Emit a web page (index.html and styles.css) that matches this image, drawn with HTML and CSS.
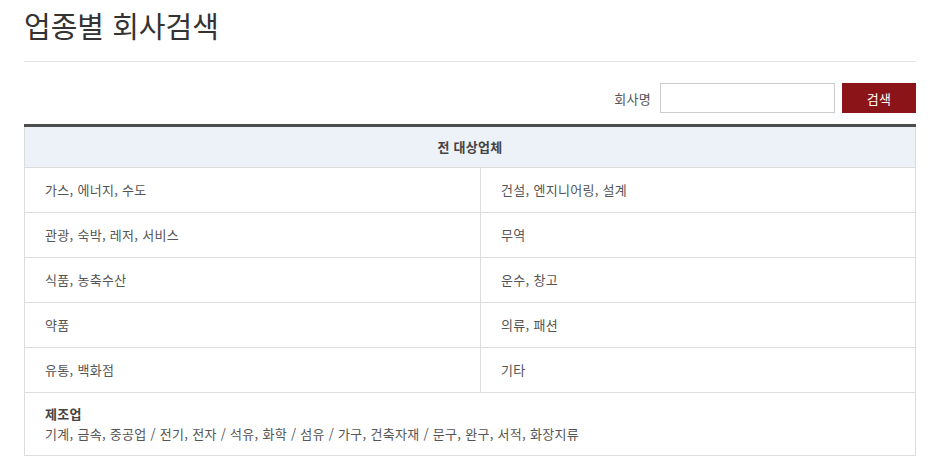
FILE: index.html
```html
<!DOCTYPE html>
<html lang="ko">
<head>
<meta charset="utf-8">
<link rel="stylesheet" href="styles.css">
</head>
<body>
<div class="page">
  <h1 class="title">업종별 회사검색</h1>
  <form class="search">
    <label class="search-label" for="company">회사명</label>
    <input class="search-input" id="company" type="text">
    <button class="search-btn" type="button">검색</button>
  </form>
  <div class="table">
    <div class="head">전 대상업체</div>
    <div class="grid">
      <div class="cell">가스, 에너지, 수도</div>
      <div class="cell">건설, 엔지니어링, 설계</div>
      <div class="cell">관광, 숙박, 레저, 서비스</div>
      <div class="cell">무역</div>
      <div class="cell">식품, 농축수산</div>
      <div class="cell">운수, 창고</div>
      <div class="cell">약품</div>
      <div class="cell">의류, 패션</div>
      <div class="cell">유통, 백화점</div>
      <div class="cell">기타</div>
    </div>
    <div class="wide">
      <strong class="wide-title">제조업</strong>
      <div class="wide-text">기계, 금속, 중공업 / 전기, 전자 / 석유, 화학 / 섬유 / 가구, 건축자재 / 문구, 완구, 서적, 화장지류</div>
    </div>
  </div>
</div>
</body>
</html>
```
FILE: styles.css
```css
* { box-sizing: border-box; }
html, body { margin: 0; padding: 0; background: #fff; }
body {
  font-family: "Noto Sans CJK KR", "Noto Sans", sans-serif;
  color: #555;
  font-size: 13px;
}
.page { width: 892px; margin-left: 24px; }
.title {
  margin: 0;
  padding-top: 5px;
  height: 62px;
  font-size: 29px;
  font-weight: 400;
  line-height: 40px;
  color: #333;
  border-bottom: 1px solid #e5e5e5;
}
.search {
  display: flex;
  justify-content: flex-end;
  align-items: center;
  margin-top: 21px;
  height: 30px;
}
.search-label { font-size: 13px; color: #555; margin-right: 9px; letter-spacing: 0.3px; }
.search-input {
  width: 175px;
  height: 30px;
  border: 1px solid #ccc;
  margin: 0;
  padding: 0 8px;
  font: inherit;
}
.search-btn {
  margin-left: 7px;
  width: 74px;
  height: 30px;
  border: 0;
  background: #8a1418;
  color: #fff;
  font-family: inherit;
  font-size: 13px;
  padding: 0;
  letter-spacing: 0.3px;
}
.table {
  margin-top: 11px;
  border-top: 3px solid #4d4d4d;
}
.head {
  height: 41px;
  background: #edf1f8;
  border: 1px solid #ddd;
  border-top: 0;
  text-align: center;
  font-weight: 700;
  line-height: 40px;
  color: #444;
  letter-spacing: 0.3px;
}
.grid {
  display: grid;
  grid-template-columns: 456px 1fr;
}
.cell {
  height: 45px;
  line-height: 44px;
  padding-left: 20px;
  border-bottom: 1px solid #ddd;
  border-left: 1px solid #ddd;
  letter-spacing: 0.3px;
}
.cell:nth-child(2n) { border-right: 1px solid #ddd; }
.wide {
  height: 63px;
  padding: 11px 20px 0;
  border: 1px solid #ddd;
  border-top: 0;
  line-height: 20px;
  letter-spacing: 0.3px;
}
.wide-title { display: block; font-weight: 700; color: #444; }
```
